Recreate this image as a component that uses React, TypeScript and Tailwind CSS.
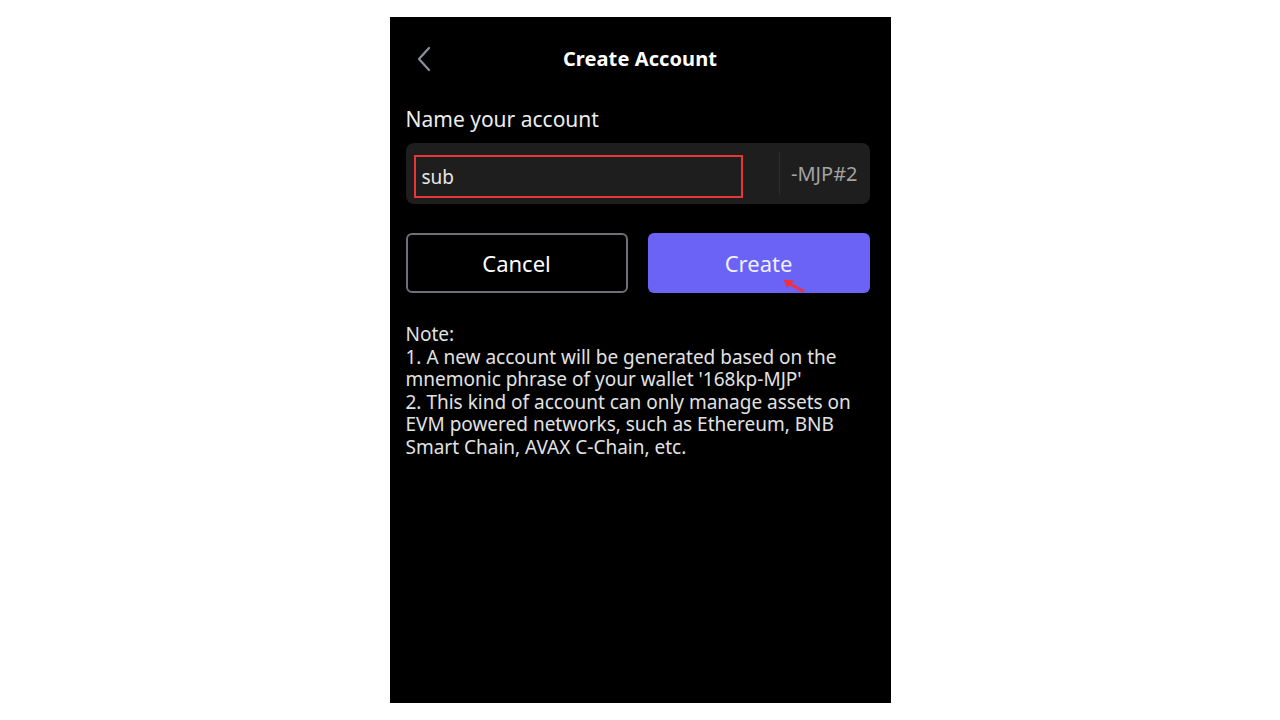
import React from 'react';

const ChevronLeft = () => (
  <svg width="14" height="26" viewBox="0 0 14 26" fill="none">
    <path d="M12 2L2 13l10 11" stroke="#8b909a" strokeWidth="2.2" strokeLinecap="round" strokeLinejoin="round" />
  </svg>
);

const PointerArrow = () => (
  <svg width="22" height="14" viewBox="0 0 22 14" fill="none">
    <path d="M20 12L6 4.5" stroke="#f0303a" strokeWidth="2.8" strokeLinecap="round" />
    <path d="M0.5 0.5l11 1.2-7.5 7z" fill="#f0303a" />
  </svg>
);

const App = () => {
  return (
    <div
      className="w-full min-h-screen bg-white flex justify-center pt-[17px]"
      style={{ fontFamily: '"Noto Sans", "Open Sans", sans-serif' }}
    >
      <div className="w-[501px] h-[686px] bg-black flex flex-col pl-4 pr-[21px]">
        {/* header */}
        <div className="relative mt-[18px] h-[48px] flex items-center justify-center pl-[5px]">
          <button className="absolute left-[11px] top-[11px]">
            <ChevronLeft />
          </button>
          <h1 className="text-white text-[20px] font-bold tracking-[0.1px]">Create Account</h1>
        </div>

        {/* name field */}
        <p className="mt-[22px] text-[#ececec] text-[21px] leading-[28px]">Name your account</p>
        <div className="mt-[10px] h-[61px] bg-[#1e1e1e] rounded-lg flex items-stretch">
          <div className="pl-2 pt-[12px] pb-[6px] flex">
            <div className="w-[329px] h-full border-[2.5px] border-[#e8353a] flex items-center pl-[6px] pt-[2px]">
              <span className="text-[#e6e6e6] text-[19px]">sub</span>
            </div>
          </div>
          <div className="flex-1" />
          <div className="my-[9px] w-px bg-[#2c2c2c]" />
          <div className="flex items-center pl-[11px] pr-3">
            <span className="text-[#a3a3a3] text-[20px]">-MJP#2</span>
          </div>
        </div>

        {/* actions */}
        <div className="mt-[29px] grid grid-cols-2 gap-5">
          <button className="h-[60px] rounded-md border-2 border-[#6f6f78] text-white text-[22px]">
            Cancel
          </button>
          <button className="relative h-[60px] rounded-md bg-[#6b63f6] text-[#f0f0ff] text-[22px]">
            Create
            <span className="absolute left-[135px] top-[46px] leading-none">
              <PointerArrow />
            </span>
          </button>
        </div>

        {/* note */}
        <div className="mt-[30px] text-[#e2e2e2] text-[19px] leading-[22.6px]">
          <p>Note:</p>
          <p>1. A new account will be generated based on the mnemonic phrase of your wallet '168kp-MJP'</p>
          <p>2. This kind of account can only manage assets on EVM powered networks, such as Ethereum, BNB Smart Chain, AVAX C-Chain, etc.</p>
        </div>
      </div>
    </div>
  );
};

export default App;
